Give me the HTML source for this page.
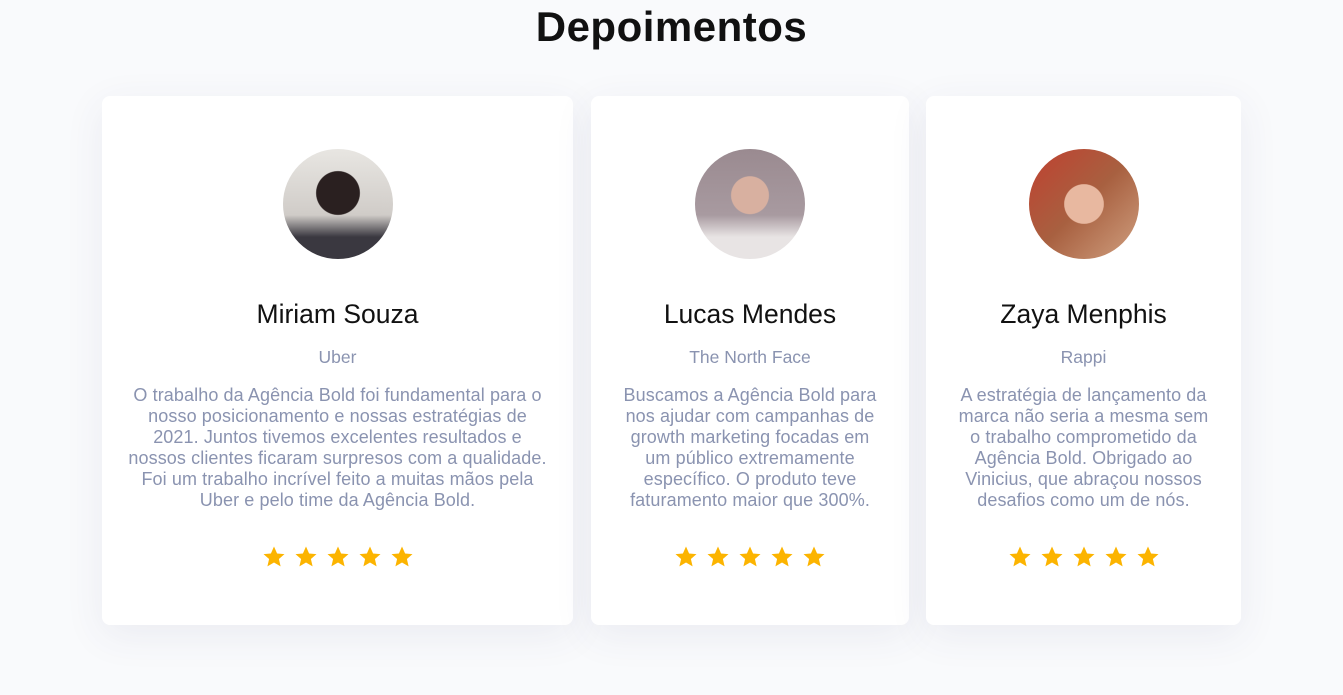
<!DOCTYPE html>
<html><head><meta charset="utf-8"><style>
body{margin:0;background:#f9fafc;font-family:"Liberation Sans",sans-serif;width:1343px;height:695px;overflow:hidden;position:relative}
h1{position:absolute;top:0;left:0;width:1343px;text-align:center;margin:0;font-size:42px;line-height:54px;font-weight:700;color:#111;letter-spacing:0.5px}
.card{position:absolute;top:96px;height:529px;background:#fff;border-radius:8px;box-shadow:0 10px 40px rgba(60,70,110,0.08);text-align:center}
.av{position:absolute;left:50%;top:53px;width:110px;height:110px;margin-left:-55px;border-radius:50%;overflow:hidden}
.name{position:absolute;top:200px;width:100%;font-size:26.5px;color:#111;line-height:36px}
.co{position:absolute;top:250px;width:100%;font-size:17.5px;color:#8a93b0;line-height:22px}
.tx{position:absolute;top:289px;width:100%;font-size:18px;color:#8a93b0;line-height:21px;white-space:nowrap;letter-spacing:0.1px}
.st{position:absolute;top:449px;width:100%;height:24px;display:flex;justify-content:center;gap:8px}
.st svg{width:24px;height:24px}
</style></head><body>
<svg width="0" height="0" style="position:absolute"><defs><symbol id="s" viewBox="0 0 24 24"><path d="M12 1.5l3.1 7 7.4.6-5.6 4.9 1.7 7.4L12 17.5l-6.6 3.9 1.7-7.4L1.5 9.1l7.4-.6z" fill="#fcb400"/></symbol></defs></svg>
<h1>Depoimentos</h1>
<div class="card" style="left:102px;width:471px">
<div class="av" style="background:radial-gradient(circle at 50% 40%,#2a2020 0 25%,transparent 26%),linear-gradient(#e8e6e2,#d0ccc8 60%,#3a3840 80%)"></div>
<div class="name">Miriam Souza</div><div class="co">Uber</div>
<div class="tx">O trabalho da Agência Bold foi fundamental para o<br>nosso posicionamento e nossas estratégias de<br>2021. Juntos tivemos excelentes resultados e<br>nossos clientes ficaram surpresos com a qualidade.<br>Foi um trabalho incrível feito a muitas mãos pela<br>Uber e pelo time da Agência Bold.</div>
<div class="st"><svg><use href="#s"/></svg><svg><use href="#s"/></svg><svg><use href="#s"/></svg><svg><use href="#s"/></svg><svg><use href="#s"/></svg></div></div>
<div class="card" style="left:591px;width:318px">
<div class="av" style="background:radial-gradient(circle at 50% 42%,#d8b0a0 0 22%,transparent 23%),linear-gradient(#9a8a90,#a89aa0 60%,#e8e4e4 80%)"></div>
<div class="name">Lucas Mendes</div><div class="co">The North Face</div>
<div class="tx">Buscamos a Agência Bold para<br>nos ajudar com campanhas de<br>growth marketing focadas em<br>um público extremamente<br>específico. O produto teve<br>faturamento maior que 300%.</div>
<div class="st"><svg><use href="#s"/></svg><svg><use href="#s"/></svg><svg><use href="#s"/></svg><svg><use href="#s"/></svg><svg><use href="#s"/></svg></div></div>
<div class="card" style="left:926px;width:315px">
<div class="av" style="background:radial-gradient(circle at 50% 50%,#e8b8a0 0 25%,transparent 26%),linear-gradient(135deg,#c04030,#a86040 50%,#d0a080)"></div>
<div class="name">Zaya Menphis</div><div class="co">Rappi</div>
<div class="tx">A estratégia de lançamento da<br>marca não seria a mesma sem<br>o trabalho comprometido da<br>Agência Bold. Obrigado ao<br>Vinicius, que abraçou nossos<br>desafios como um de nós.</div>
<div class="st"><svg><use href="#s"/></svg><svg><use href="#s"/></svg><svg><use href="#s"/></svg><svg><use href="#s"/></svg><svg><use href="#s"/></svg></div></div>
</body></html>
